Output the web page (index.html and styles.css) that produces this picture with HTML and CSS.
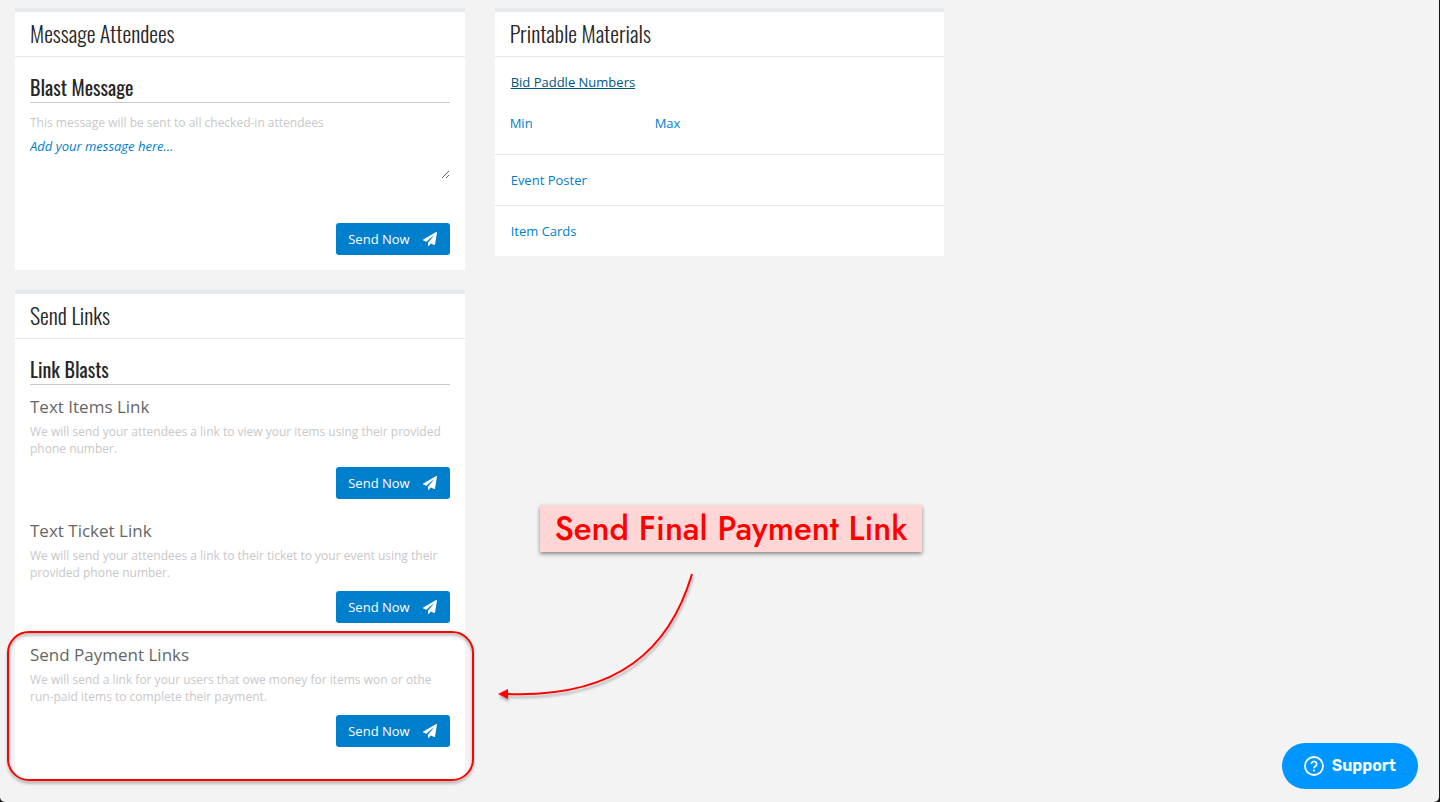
FILE: index.html
```html
<!DOCTYPE html>
<html lang="en">
<head>
<meta charset="utf-8">
<title>Event Messages</title>
<link rel="stylesheet" href="styles.css">
</head>
<body>
<svg class="sprite" aria-hidden="true">
  <symbol id="plane" viewBox="0 0 1792 1792"><path fill="currentColor" d="M1764 11q33 24 27 64l-256 1536q-5 29-32 45-14 8-31 8-11 0-24-5l-453-185-242 295q-18 23-49 23-13 0-22-4-19-7-30.500-23.500t-11.500-36.500v-349l864-1059-1069 925-395-162q-37-14-40-55-2-40 32-59l1664-960q15-9 32-9 20 0 36 11z"/></symbol>
</svg>
<div class="window">
<main class="columns">
  <div class="column">
    <section class="card">
      <h2 class="card-title">Message Attendees</h2>
      <form class="card-body">
        <h3 class="section-title">Blast Message</h3>
        <label class="hint message-hint" for="message">This message will be sent to all checked-in attendees</label>
        <textarea class="message" id="message" placeholder="Add your message here..."></textarea>
        <div class="actions"><button class="send" type="button">Send Now <svg class="plane"><use href="#plane"/></svg></button></div>
      </form>
    </section>
    <section class="card links-card">
      <h2 class="card-title">Send Links</h2>
      <div class="card-body">
        <h3 class="section-title">Link Blasts</h3>
        <article class="blast">
          <h4 class="blast-title">Text Items Link</h4>
          <p class="hint">We will send your attendees a link to view your items using their provided phone number.</p>
          <div class="actions"><button class="send" type="button">Send Now <svg class="plane"><use href="#plane"/></svg></button></div>
        </article>
        <article class="blast">
          <h4 class="blast-title">Text Ticket Link</h4>
          <p class="hint">We will send your attendees a link to their ticket to your event using their provided phone number.</p>
          <div class="actions"><button class="send" type="button">Send Now <svg class="plane"><use href="#plane"/></svg></button></div>
        </article>
        <article class="blast">
          <h4 class="blast-title">Send Payment Links</h4>
          <p class="hint">We will send a link for your users that owe money for items won or othe<br>run-paid items to complete their payment.</p>
          <div class="actions"><button class="send" type="button">Send Now <svg class="plane"><use href="#plane"/></svg></button></div>
          <div class="outline"></div>
          <div class="callout">
            <p class="callout-label">Send Final Payment Link</p>
            <svg class="arrow" viewBox="0 0 210 140" aria-hidden="true"><path d="M197 7C175 81 124 131 12 127" fill="none" stroke="#f00" stroke-width="2"/><path d="M3 127l10-5v10z" fill="#f00"/></svg>
          </div>
        </article>
      </div>
    </section>
  </div>
  <div class="column">
    <section class="card">
      <h2 class="card-title">Printable Materials</h2>
      <ul class="materials">
        <li class="material">
          <a class="link current" href="#paddles">Bid Paddle Numbers</a>
          <div class="range"><label class="range-field">Min<input class="range-input" type="text"></label><label class="range-field">Max<input class="range-input" type="text"></label></div>
        </li>
        <li class="material"><a class="link" href="#poster">Event Poster</a></li>
        <li class="material"><a class="link" href="#cards">Item Cards</a></li>
      </ul>
    </section>
  </div>
</main>
<button class="support" type="button"><svg class="support-icon" viewBox="0 0 20 20" fill="none" stroke="currentColor" aria-hidden="true"><circle cx="10" cy="10" r="9" stroke-width="1.800"/><path d="M7.300 8a2.700 2.500 0 1 1 4.300 2Q10 11 10 12.300" stroke-width="1.700"/><circle cx="10" cy="14.600" r="1" fill="currentColor" stroke="none"/></svg>Support</button>
</div>
</body>
</html>
```

FILE: styles.css
```css
* { box-sizing: border-box; }
body { margin: 0; background: #15171a; font-family: "Open Sans", "Noto Sans", sans-serif; font-size: 13px; line-height: 20px; color: #262626; }
h2, h3, h4, p, ul { margin: 0; padding: 0; }
.sprite { position: absolute; width: 0; height: 0; }
.window { min-height: 100vh; margin-right: 1px; padding: 8px 15px 0; background: #f3f3f3; border-radius: 0 0 5px 5px; }
.columns { display: grid; grid-template-columns: repeat(3, 1fr); gap: 30px; align-items: start; }
.column { display: flex; flex-direction: column; gap: 20px; }
.card { background: #fff; border-top: 4px solid #e6eaed; }
.card-title, .section-title { font-family: Oswald, "Liberation Sans Narrow", "DejaVu Sans Condensed", sans-serif; }
.card-title { padding: 0 15px 2px; font-size: 22px; font-weight: 300; line-height: 42px; border-bottom: 1px solid #e8e8e8; }
.card-body { padding: 15px; }
.section-title { margin-bottom: 10px; font-size: 20px; font-weight: 400; line-height: 30px; border-bottom: 1px solid #c8c8c8; }
.hint { display: block; font-size: 12px; line-height: 17px; color: #c8c8c8; }
.message-hint { padding-top: 1px; }
.message { display: block; width: 100%; height: 42px; margin: 6px 0 44px; padding: 0; border: 0; outline: 0; background: none; font: italic 500 13px/18px "Open Sans", sans-serif; color: #0080cc; resize: vertical; }
.message::placeholder { color: #0080cc; }
.actions { display: flex; justify-content: flex-end; }
.send { display: flex; align-items: center; gap: 13px; height: 32px; padding: 0 13px 0 12px; border: 0; border-radius: 3px; background: #0080cc; color: #fff; font: 500 13px/20px "Open Sans", sans-serif; }
.plane { width: 14px; height: 14px; }
.links-card .card-body { padding-bottom: 12px; }
.blast { position: relative; padding-bottom: 20px; }
.blast-title { margin-bottom: 5px; font-size: 17px; font-weight: 400; line-height: 23px; color: #666; }
.blast .actions { margin-top: 10px; }
.outline { position: absolute; inset: -12px -24px -14px -23px; border: 2px solid #f00; border-radius: 22px; box-shadow: 0 3px 3px rgba(0,0,0,.22), inset 0 3px 3px rgba(0,0,0,.22); pointer-events: none; }
.callout { position: absolute; left: calc(100% + 45px); bottom: 60px; display: flex; flex-direction: column; gap: 15px; }
.callout-label { margin-left: 45px; padding: 0 14px 0 15px; background: #ffd6d6; box-shadow: 0 2px 4px rgba(0,0,0,.45); font: 500 33px/47px Futura, Jost, Lato, sans-serif; color: #f00; white-space: nowrap; }
.arrow { width: 210px; height: 140px; filter: drop-shadow(1px 3px 1px rgba(0,0,0,.25)); }
.materials { list-style: none; }
.material { padding: 15px; border-top: 1px solid #e8e8e8; }
.material:first-child { border-top: 0; }
.link { padding: 0 1px; color: #0080cc; text-decoration: none; }
.current { color: #005580; text-decoration: underline; padding: 0; margin-left: 1px; }
.range { display: flex; padding: 21px 0 6px; }
.range-field { display: flex; gap: 8px; width: 145px; color: #0080cc; }
.range-input { width: 80px; height: 20px; padding: 0; border: 0; outline: 0; background: none; }
.support { position: fixed; right: 22px; bottom: 13px; display: flex; align-items: center; gap: 8px; height: 46px; padding: 0 22px; border: 0; border-radius: 23px; background: #0096ff; color: #fff; font: 600 16px/20px Rubik, Inter, Roboto, sans-serif; }
.support-icon { width: 20px; height: 20px; }
```
